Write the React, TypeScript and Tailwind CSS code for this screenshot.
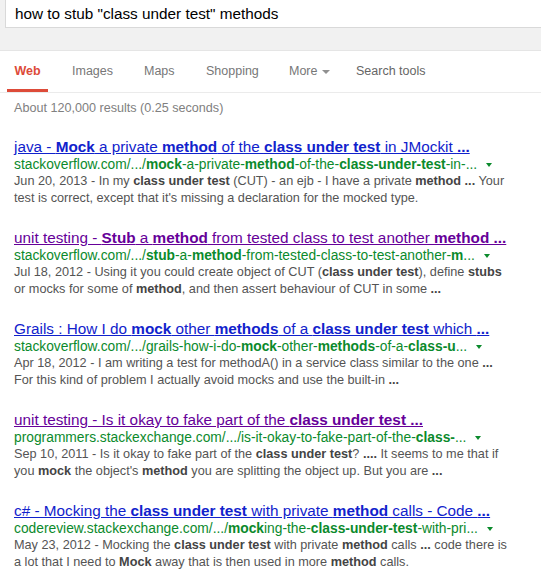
import React from "react";

type Seg = [string, boolean];

const b = (s: string): Seg => [s, true];
const n = (s: string): Seg => [s, false];

type Result = {
  visited: boolean;
  title: Seg[];
  url: Seg[];
  line1: Seg[];
  line2: Seg[];
};

const results: Result[] = [
  {
    visited: false,
    title: [n("java - "), b("Mock"), n(" a private "), b("method"), n(" of the "), b("class under test"), n(" in JMockit "), b("...")],
    url: [n("stackoverflow.com/.../"), b("mock"), n("-a-private-"), b("method"), n("-of-the-"), b("class-under-test"), n("-in-...")],
    line1: [n("Jun 20, 2013 - In my "), b("class under test"), n(" (CUT) - an ejb - I have a private "), b("method ..."), n(" Your")],
    line2: [n("test is correct, except that it's missing a declaration for the mocked type.")],
  },
  {
    visited: true,
    title: [n("unit testing - "), b("Stub"), n(" a "), b("method"), n(" from tested class to test another "), b("method ...")],
    url: [n("stackoverflow.com/.../"), b("stub"), n("-a-"), b("method"), n("-from-tested-class-to-test-another-"), b("m"), n("...")],
    line1: [n("Jul 18, 2012 - Using it you could create object of CUT ("), b("class under test"), n("), define "), b("stubs")],
    line2: [n("or mocks for some of "), b("method"), n(", and then assert behaviour of CUT in some "), b("...")],
  },
  {
    visited: false,
    title: [n("Grails : How I do "), b("mock"), n(" other "), b("methods"), n(" of a "), b("class under test"), n(" which "), b("...")],
    url: [n("stackoverflow.com/.../grails-how-i-do-"), b("mock"), n("-other-"), b("methods"), n("-of-a-"), b("class-u"), n("...")],
    line1: [n("Apr 18, 2012 - I am writing a test for methodA() in a service class similar to the one "), b("...")],
    line2: [n("For this kind of problem I actually avoid mocks and use the built-in "), b("...")],
  },
  {
    visited: true,
    title: [n("unit testing - Is it okay to fake part of the "), b("class under test ...")],
    url: [n("programmers.stackexchange.com/.../is-it-okay-to-fake-part-of-the-"), b("class-"), n("...")],
    line1: [n("Sep 10, 2011 - Is it okay to fake part of the "), b("class under test"), n("? "), b("...."), n(" It seems to me that if")],
    line2: [n("you "), b("mock"), n(" the object's "), b("method"), n(" you are splitting the object up. But you are "), b("...")],
  },
  {
    visited: false,
    title: [n("c# - Mocking the "), b("class under test"), n(" with private "), b("method"), n(" calls - Code "), b("...")],
    url: [n("codereview.stackexchange.com/.../"), b("mock"), n("ing-the-"), b("class-under-test"), n("-with-pri...")],
    line1: [n("May 23, 2012 - Mocking the "), b("class under test"), n(" with private "), b("method"), n(" calls "), b("..."), n(" code there is")],
    line2: [n("a lot that I need to "), b("Mock"), n(" away that is then used in more "), b("method"), n(" calls.")],
  },
];

function Segs({ segs, boldClass }: { segs: Seg[]; boldClass?: string }) {
  return (
    <>
      {segs.map(([t, isB], i) =>
        isB ? (
          <b key={i} className={"font-bold " + (boldClass ?? "")}>
            {t}
          </b>
        ) : (
          <span key={i}>{t}</span>
        )
      )}
    </>
  );
}

export default function App() {
  return (
    <div
      className="w-[541px] h-[577px] overflow-hidden bg-white"
      style={{ fontFamily: '"Liberation Sans", Arial, Helvetica, sans-serif' }}
    >
      {/* header */}
      <div className="bg-[#f1f1f1] h-[51px] pl-[5px] border-b border-[#e5e5e5]">
        <div className="h-[28px] bg-white border-l border-b border-[#d9d9d9] pl-[9px] flex items-end">
          <span className="text-[15.3px] leading-[20px] text-black pb-[3px]">
            how to stub "class under test" methods
          </span>
        </div>
      </div>

      {/* tabs */}
      <div className="h-[42px] border-b border-[#ebebeb] flex items-stretch text-[12.5px] pl-[7px]">
        <div className="relative w-[41px] flex items-center justify-center text-[#dd4b39] font-bold">
          Web
          <div className="absolute left-0 right-0 bottom-0 h-[3px] bg-[#dd4b39]" />
        </div>
        <div className="w-[24px]" />
        <div className="w-[72px] flex items-center text-[#777777]">Images</div>
        <div className="w-[62px] flex items-center text-[#777777]">Maps</div>
        <div className="w-[83px] flex items-center text-[#777777]">Shopping</div>
        <div className="w-[67px] flex items-center text-[#777777]">
          More
          <span className="ml-[5px] inline-block w-0 h-0 border-l-[4px] border-r-[4px] border-t-[4px] border-l-transparent border-r-transparent border-t-[#909090]" />
        </div>
        <div className="flex items-center text-[#666666]">Search tools</div>
      </div>

      {/* stats */}
      <div className="pl-[14px] pt-[7px] text-[12.6px] leading-[16px] text-[#808080]">
        About 120,000 results (0.25 seconds)
      </div>

      {/* results */}
      <div className="pl-[14px] pt-[21px] flex flex-col gap-[21px]">
        {results.map((r, i) => (
          <div key={i} className="flex flex-col">
            <div
              className={
                "text-[15.3px] leading-[19px] underline whitespace-nowrap " +
                (r.visited ? "text-[#660099]" : "text-[#1122cc]")
              }
            >
              <Segs segs={r.title} />
            </div>
            <div className="text-[13.8px] leading-[17px] text-[#0b8a2c] whitespace-nowrap flex items-center">
              <span>
                <Segs segs={r.url} />
              </span>
              <span className="ml-[9px] inline-block w-0 h-0 border-l-[3.5px] border-r-[3.5px] border-t-[4px] border-l-transparent border-r-transparent border-t-[#0b8a2c]" />
            </div>
            <div className="text-[12.7px] leading-[17px] text-[#545454] whitespace-nowrap">
              <div>
                <Segs segs={r.line1} boldClass="text-[#444444]" />
              </div>
              <div>
                <Segs segs={r.line2} boldClass="text-[#444444]" />
              </div>
            </div>
          </div>
        ))}
      </div>
    </div>
  );
}
